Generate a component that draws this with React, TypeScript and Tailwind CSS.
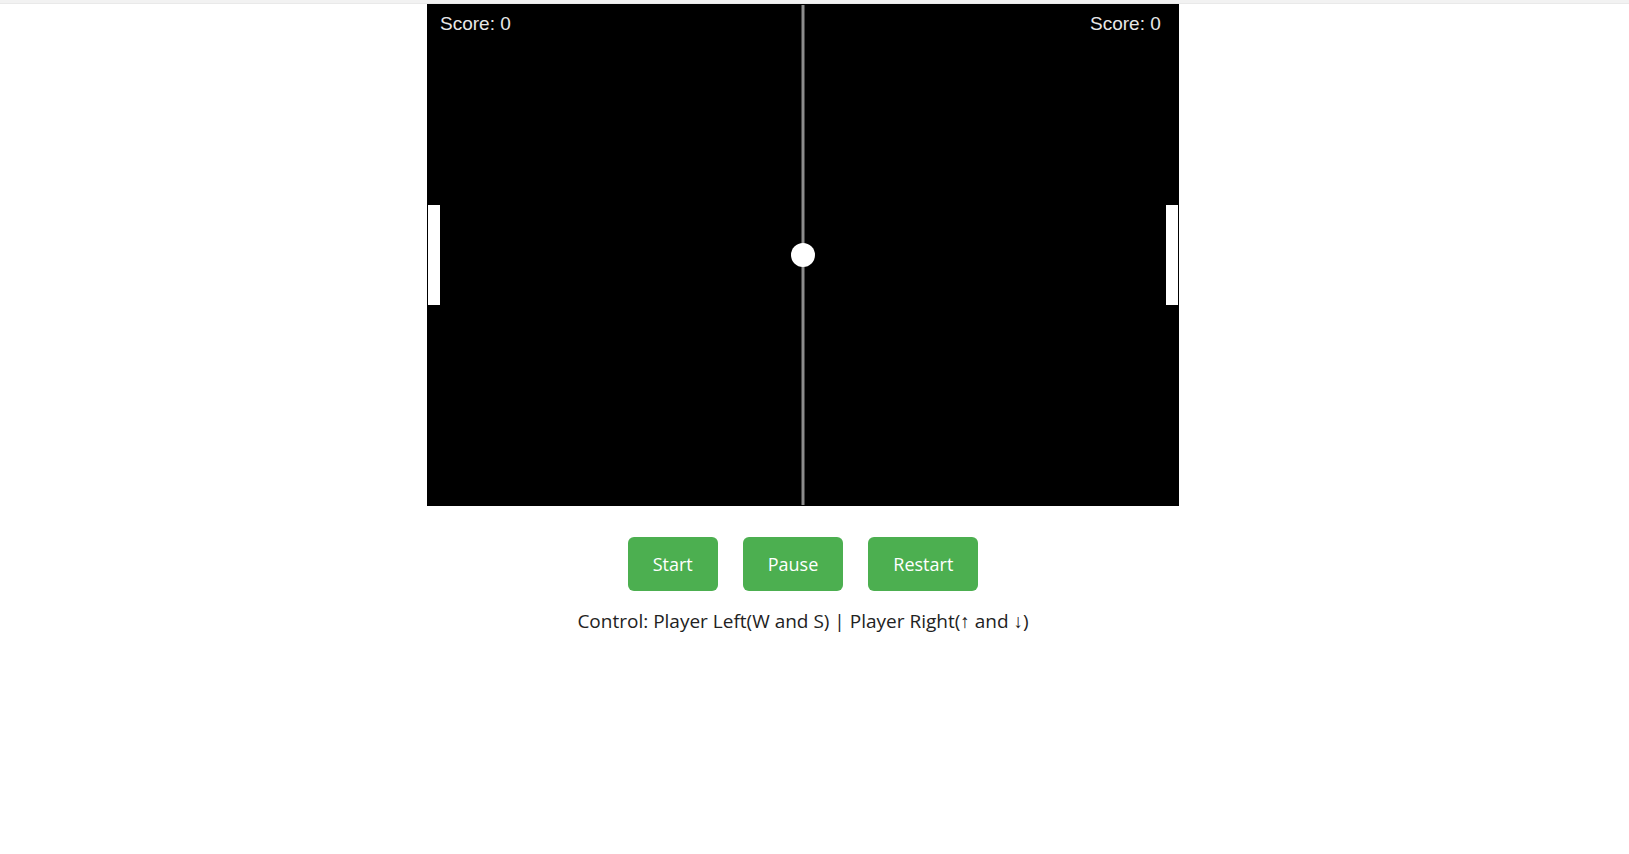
import React from 'react';

export default function App() {
  const W = 750;
  const H = 500;
  const paddleH = 100;
  const paddleW = 12;
  const leftY = H / 2 - paddleH / 2;
  const rightY = H / 2 - paddleH / 2;

  return (
    <div className="min-h-screen bg-white" style={{ fontFamily: '"Open Sans", "Noto Sans", sans-serif' }}>
      <div className="h-[4px] bg-[#f2f2f2] border-b border-[#e9e9e9]" />
      <div className="flex flex-col items-center pr-[23px]">
        <svg
          width={W + 2}
          height={H + 2}
          viewBox={`-1 -1 ${W + 2} ${H + 2}`}
          className="block bg-black"
        >
          <rect x={-1} y={-1} width={W + 2} height={H + 2} fill="#000" />
          <line x1={W / 2} y1={0} x2={W / 2} y2={H} stroke="#8c8c8c" strokeWidth={3} />
          <rect x={0} y={leftY} width={paddleW} height={paddleH} fill="#fff" />
          <rect x={W - paddleW} y={rightY} width={paddleW} height={paddleH} fill="#fff" />
          <circle cx={W / 2} cy={H / 2} r={12} fill="#fff" />
          <text x={12} y={25} fill="#e8e8e8" fontSize={19} fontFamily='"Liberation Sans", Arial, sans-serif'>
            Score: 0
          </text>
          <text x={W - 88} y={25} fill="#e8e8e8" fontSize={19} fontFamily='"Liberation Sans", Arial, sans-serif'>
            Score: 0
          </text>
        </svg>

        <div className="flex gap-[25px] mt-[31px]">
          <button className="bg-[#4caf50] text-white text-[18px] leading-[24px] py-[15px] px-[25px] rounded-[6px]">
            Start
          </button>
          <button className="bg-[#4caf50] text-white text-[18px] leading-[24px] py-[15px] px-[25px] rounded-[6px]">
            Pause
          </button>
          <button className="bg-[#4caf50] text-white text-[18px] leading-[24px] py-[15px] px-[25px] rounded-[6px]">
            Restart
          </button>
        </div>

        <p className="mt-[17px] text-[19px] leading-[26px] text-[#222]">
          Control: Player Left(W and S) | Player Right(↑ and ↓)
        </p>
      </div>
    </div>
  );
}
